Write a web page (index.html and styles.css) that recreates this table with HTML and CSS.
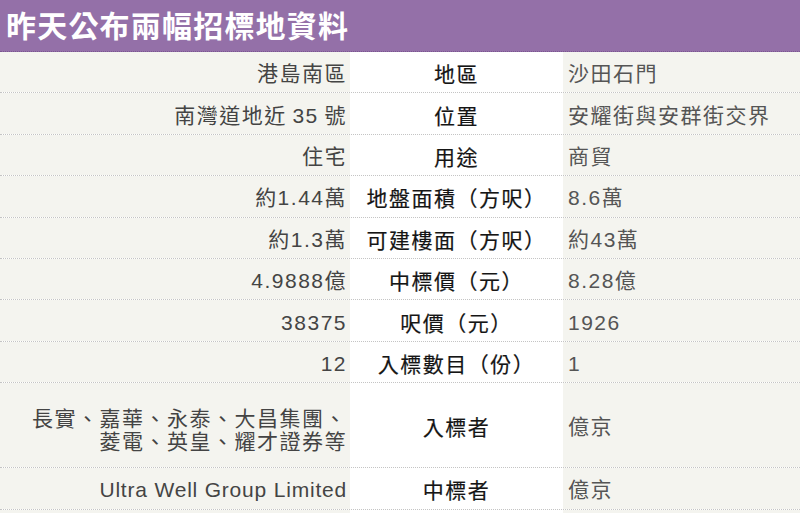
FILE: index.html
```html
<!DOCTYPE html>
<html lang="zh-Hant">
<head>
<meta charset="utf-8">
<title>昨天公布兩幅招標地資料</title>
<link rel="stylesheet" href="styles.css">
</head>
<body>
<div class="page">
  <header class="title-bar">
    <h1 class="title">昨天公布兩幅招標地資料</h1>
  </header>
  <div class="table">
    <div class="row"><div class="cell left">港島南區</div><div class="cell mid">地區</div><div class="cell right">沙田石門</div></div>
    <div class="row"><div class="cell left">南灣道地近&thinsp;35&thinsp;號</div><div class="cell mid">位置</div><div class="cell right">安耀街與安群街交界</div></div>
    <div class="row"><div class="cell left">住宅</div><div class="cell mid">用途</div><div class="cell right">商貿</div></div>
    <div class="row"><div class="cell left">約1.44萬</div><div class="cell mid">地盤面積（方呎）</div><div class="cell right">8.6萬</div></div>
    <div class="row"><div class="cell left">約1.3萬</div><div class="cell mid">可建樓面（方呎）</div><div class="cell right">約43萬</div></div>
    <div class="row"><div class="cell left">4.9888億</div><div class="cell mid">中標價（元）</div><div class="cell right">8.28億</div></div>
    <div class="row"><div class="cell left">38375</div><div class="cell mid">呎價（元）</div><div class="cell right">1926</div></div>
    <div class="row"><div class="cell left">12</div><div class="cell mid">入標數目（份）</div><div class="cell right">1</div></div>
    <div class="row tall"><div class="cell left multi"><div class="line">長實、嘉華、永泰、大昌集團、</div><div class="line">菱電、英皇、耀才證券等</div></div><div class="cell mid">入標者</div><div class="cell right">億京</div></div>
    <div class="row"><div class="cell left"><span class="latin">Ultra Well Group Limited</span></div><div class="cell mid">中標者</div><div class="cell right">億京</div></div>
    <div class="row filler"><div class="cell left"></div><div class="cell mid"></div><div class="cell right"></div></div>
  </div>
</div>
</body>
</html>
```
FILE: styles.css
```css
html, body {
  margin: 0;
  padding: 0;
  background: #ffffff;
}
body {
  width: 800px;
  height: 513px;
  overflow: hidden;
  font-family: "Liberation Sans", "Noto Sans CJK TC", sans-serif;
}
.page {
  width: 800px;
}
.title-bar {
  background: #9470a8;
  height: 52px;
  box-sizing: border-box;
  border-bottom: 1px dotted #7a5690;
  display: flex;
  align-items: center;
  padding-left: 6px;
  padding-bottom: 3px;
}
.title {
  margin: 0;
  color: #ffffff;
  font-family: "Noto Sans CJK TC", sans-serif;
  font-weight: 700;
  font-size: 30px;
  letter-spacing: 1.2px;
  line-height: 1;
}
.table {
  display: flex;
  flex-direction: column;
}
.row {
  display: grid;
  grid-template-columns: 350px 213px 1fr;
  height: 41.4px;
  box-sizing: border-box;
  border-bottom: 1px dotted #c4c4c4;
}
.row.tall {
  height: 85px;
}
.row.filler {
  height: 10px;
  border-bottom: none;
}
.cell {
  display: flex;
  align-items: center;
  padding-top: 3px;
  font-size: 21px;
  letter-spacing: 1.5px;
  line-height: 23px;
  white-space: nowrap;
}
.left {
  background: #f4f4ef;
  color: #444444;
  justify-content: flex-end;
  text-align: right;
  padding-right: 3px;
}
.left.multi {
  flex-direction: column;
  align-items: flex-end;
  justify-content: center;
  padding-top: 10px;
}
.line {
  height: 23px;
  line-height: 23px;
}
.mid {
  background: #ffffff;
  color: #151515;
  justify-content: center;
  font-weight: 400;
  font-family: "Noto Sans CJK TC", sans-serif;
  -webkit-text-stroke: 0.2px #151515;
}
.right {
  background: #f4f4ef;
  color: #555555;
  padding-left: 5px;
}
.latin {
  letter-spacing: 0.8px;
}
```
